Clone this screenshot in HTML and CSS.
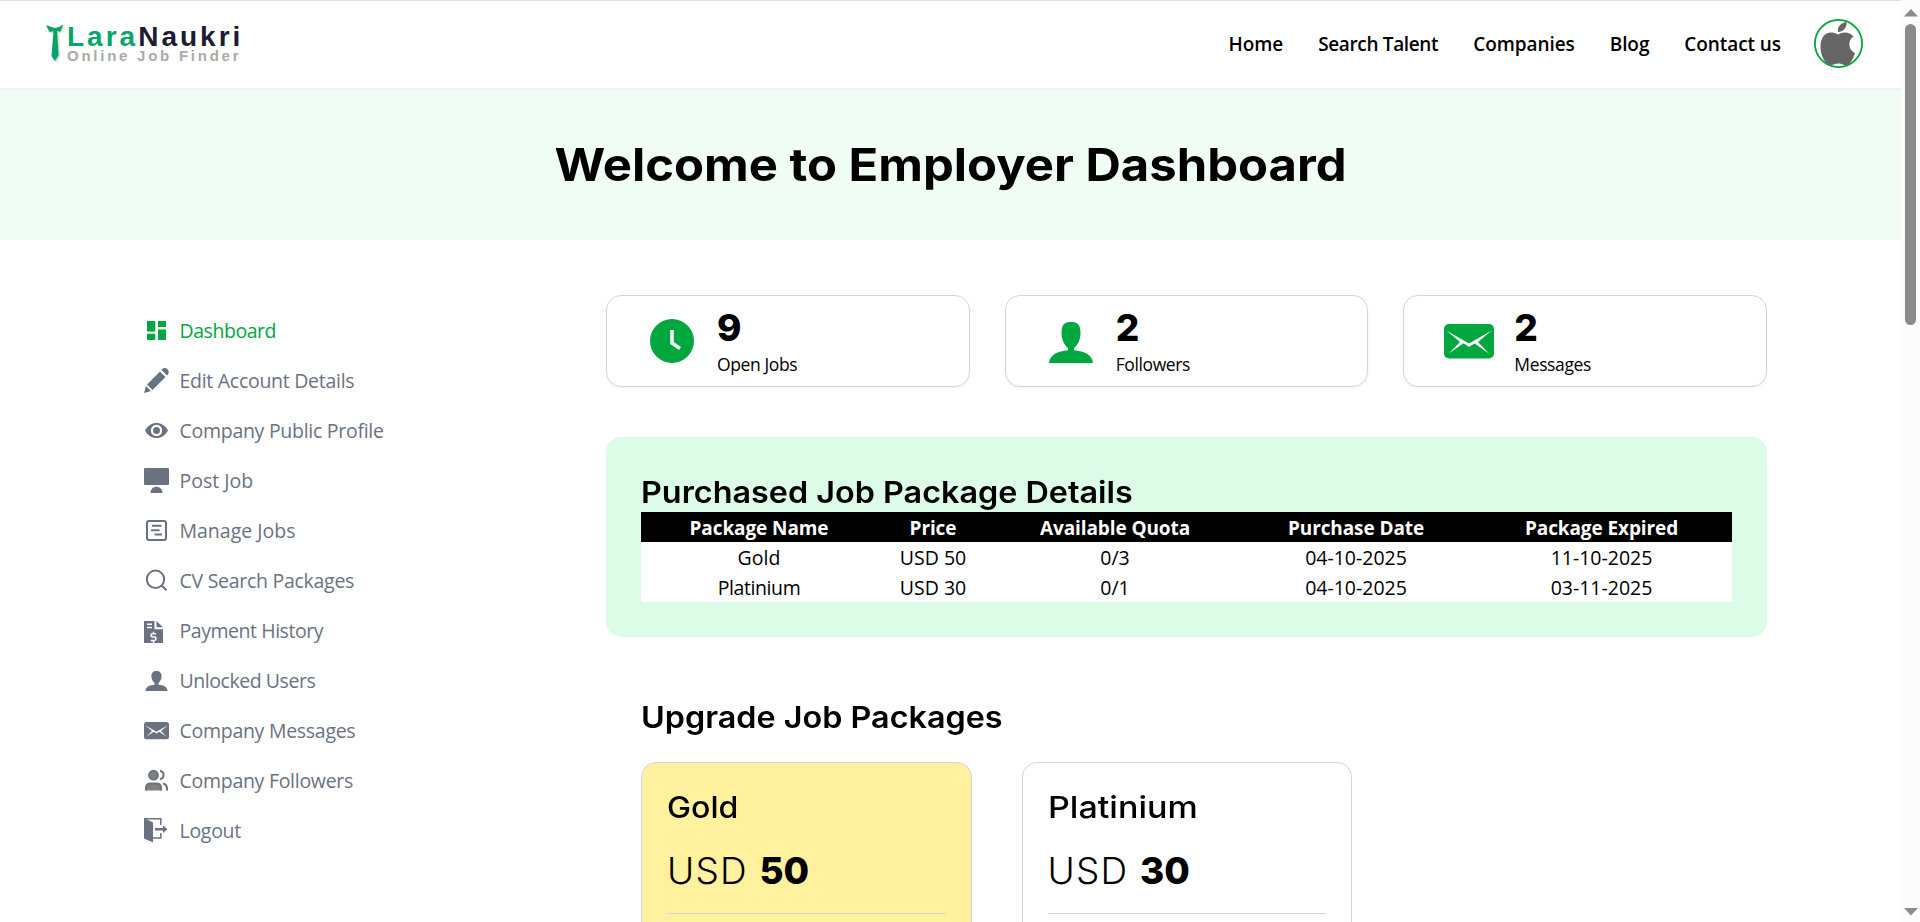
FILE: index.html
```html
<!DOCTYPE html>
<html lang="en">
<head>
<meta charset="utf-8">
<title>Employer Dashboard</title>
<link rel="stylesheet" href="styles.css">
</head>
<body>
<div class="window">
<div class="page">
  <header class="topbar">
    <a class="logo">
      <svg class="logo-tie" viewBox="0 0 18 38"><path d="M0 1 5 3 9 4 13 3 17.500 0.500 14 8 11 6.500 12.500 31 9 37 5.500 32 7.500 7 3.500 8Z" fill="#05a568"/></svg>
      <span class="logo-words">
        <span class="logo-name"><span class="logo-lara">Lara</span><span class="logo-naukri">Naukri</span></span>
        <span class="logo-tag">Online Job Finder</span>
      </span>
    </a>
    <nav class="nav">
      <a>Home</a><a class="snug">Search Talent</a><a>Companies</a><a>Blog</a><a>Contact us</a>
      <svg class="avatar" viewBox="0 0 49 49"><circle cx="24.500" cy="24.500" r="23.600" fill="#fff" stroke="#00a63e" stroke-width="1.800"/><path d="M24 15.500C28 13 35 12 39.500 17.500 33.500 21 34 31 41 34 39 40 36 46 32 46 28 46 28 44.500 24.500 44.500S20 46 17 46C11 46 6.500 36 6.500 28 6.500 15 15 10.500 24 15.500ZM24 13C23 7 28 3.500 32.500 3 33 9 29 13 24 13Z" fill="#666"/></svg>
    </nav>
  </header>
  <section class="hero"><h1>Welcome to Employer Dashboard</h1></section>
  <div class="columns">
    <aside class="side">
      <a class="active"><svg viewBox="0 0 25 25"><path d="M3 3h8.300v10.500H3zM3 15.700h8.300V22H3zM14 3h8v6h-8zM14 11.500h8V22h-8z"/></svg><span class="snug">Dashboard</span></a>
      <a><svg viewBox="0 0 25 25"><path d="M0 25 2 18 7 23ZM3 16.500 16 3.500 21.500 9 8.500 22ZM17.500 2C19.500-.5 22-.5 23.500 1.300S25.500 5.500 23 7.500Z"/></svg><span>Edit Account Details</span></a>
      <a><svg viewBox="0 0 25 25"><path fill-rule="evenodd" d="M1 12.500C6 2.500 19 2.500 24 12.500 19 22.500 6 22.500 1 12.500ZM12.500 6.800a5.700 5.700 0 1 0 0 11.400a5.700 5.700 0 1 0 0-11.400ZM12.500 9a3.500 3.500 0 1 1 0 7a3.500 3.500 0 1 1 0-7Z"/></svg><span>Company Public Profile</span></a>
      <a><svg viewBox="0 0 25 25"><rect width="25" height="17" rx="1"/><path d="M6.500 25C6.500 16.700 18.500 16.700 18.500 25Z"/></svg><span class="loose">Post Job</span></a>
      <a><svg class="line" viewBox="0 0 25 25"><rect x="3" y="3" width="19" height="19" rx="2"/><path d="M8 7.800h9.500M7 12.300h8.500M10.500 16.500H18"/></svg><span class="loose">Manage Jobs</span></a>
      <a><svg class="line" viewBox="0 0 25 25"><circle cx="11.500" cy="11.300" r="8.700"/><path d="M17.700 17.500 22.500 22.200"/></svg><span>CV Search Packages</span></a>
      <a><svg viewBox="0 0 25 25"><path d="M0 3h10.500v8.300H19V25H0zM12.500 3 19 9.300h-6.500z"/><path class="cut" d="M3 6.200h5M3 9.500h5M12 15.700H8.600Q7 15.700 7 17.300T8.600 19H10.200Q12 19 12 20.700T10.200 22.500H6.700M9.500 13.800v1.900M9.500 22.500V25"/></svg><span class="snug">Payment History</span></a>
      <a><svg viewBox="0 0 25 25"><path d="M12.500 3C16 3 17.600 5 17.600 8.500 17.600 11.500 16 13.500 14.500 15v1.800C19 17 23 18.500 23.600 23H1.400C2 18.500 6 17 10.500 16.800V15C9 13.500 7.400 11.500 7.400 8.500 7.400 5 9 3 12.500 3Z"/></svg><span class="snug">Unlocked Users</span></a>
      <a><svg viewBox="0 0 50 50"><rect y="8" width="50" height="34.500" rx="5"/><path fill="#fff" d="M2.400 14.500 25 27.500 47.700 14.500 34 26 45 37.500 30.500 27.500 25 31 19.600 27.300 4.700 37.500 16 26Z"/></svg><span>Company Messages</span></a>
      <a><svg class="line duo" viewBox="0 0 25 25"><circle cx="9.500" cy="7.200" r="4.400"/><path d="M2 22.500V20Q2 15.500 6.500 15.500H12.500Q17 15.500 17 20V22.500"/><path class="open" d="M16 3Q19.500 3.500 19.500 7T16 11M19 15.500Q23 16.500 23 20.500V22.500"/></svg><span>Company Followers</span></a>
      <a><svg viewBox="0 0 25 25"><path d="M0 0 9 4.500V24.500L0 20.500Z"/><path class="thin" d="M0 .7H16.800V7M16.800 15v5H9"/><path d="M11 10h8V7.500l4.500 3.700L19 15v-2.500h-8Z"/></svg><span>Logout</span></a>
    </aside>
    <main class="main">
      <section class="stats">
        <div class="stat"><svg viewBox="0 0 50 50"><circle cx="25" cy="25" r="22"/><path class="hand" d="M25 14V27L33 32.500"/></svg><div><b>9</b><span>Open Jobs</span></div></div>
        <div class="stat"><svg viewBox="0 0 50 50"><path d="M25 6C31 6 34.500 8 34.500 17 34.500 25 31 29.500 28 32V34.300C38 35 46.500 39 47 47H3C3.500 39 12 35 22 34.300V32C19 29.500 15.500 25 15.500 17 15.500 8 19 6 25 6Z"/></svg><div><b>2</b><span>Followers</span></div></div>
        <div class="stat"><svg viewBox="0 0 50 50"><rect y="8" width="50" height="34.500" rx="5"/><path fill="#fff" d="M2.400 14.500 25 27.500 47.700 14.500 34 26 45 37.500 30.500 27.500 25 31 19.600 27.300 4.700 37.500 16 26Z"/></svg><div><b>2</b><span>Messages</span></div></div>
      </section>
      <section class="purchased">
        <h2>Purchased Job Package Details</h2>
        <table>
          <colgroup><col class="c1"><col class="c2"><col class="c3"><col class="c4"><col class="c5"></colgroup>
          <thead><tr><th>Package Name</th><th>Price</th><th>Available Quota</th><th>Purchase Date</th><th>Package Expired</th></tr></thead>
          <tbody>
            <tr><td>Gold</td><td>USD 50</td><td>0/3</td><td>04-10-2025</td><td>11-10-2025</td></tr>
            <tr><td class="snug">Platinium</td><td>USD 30</td><td>0/1</td><td>04-10-2025</td><td>03-11-2025</td></tr>
          </tbody>
        </table>
      </section>
      <section class="upgrade">
        <h2>Upgrade Job Packages</h2>
        <div class="plans">
          <article class="plan gold"><h3>Gold</h3><p>USD <b>50</b></p></article>
          <article class="plan"><h3 class="wide">Platinium</h3><p>USD <b>30</b></p></article>
        </div>
      </section>
    </main>
  </div>
</div>
<div class="scrollbar">
  <svg viewBox="0 0 14 8"><path d="M7 0 14 7.500H0Z"/></svg>
  <i></i>
  <svg class="down" viewBox="0 0 14 8"><path d="M0 0H14L7 7.500Z"/></svg>
</div>
</div>
</body>
</html>
```
FILE: styles.css
```css
* { box-sizing: border-box; }
body { margin: 0; background: #fff; color: #000; font: 20px/30px "Open Sans", "Noto Sans", sans-serif; }
h1, h2, h3, p { margin: 0; }
.window { display: flex; height: 922px; overflow: hidden; }
.page { flex: 1; height: 922px; overflow: hidden; }

.topbar { display: flex; justify-content: space-between; height: 90px; padding: 0 38px 0 46px; border-top: 1px solid #d8e5e0; border-bottom: 2px solid #f1f2f3; }
.logo { display: flex; gap: 3px; padding-top: 23px; }
.logo-tie { width: 18px; height: 38px; filter: drop-shadow(1px 1px 1px #bbb); }
.logo-words { display: flex; flex-direction: column; font-family: "Liberation Sans", Arial, sans-serif; font-weight: bold; }
.logo-name { font-size: 28px; line-height: 26px; letter-spacing: 3px; }
.logo-lara { color: #05a568; }
.logo-naukri { color: #1b1b33; }
.logo-tag { margin-top: -1px; font-size: 15px; line-height: 14px; letter-spacing: 2.75px; color: #aaa; }
.nav { display: flex; align-items: center; gap: 35px; padding-bottom: 2px; font-weight: 600; font-size: 19px; letter-spacing: -0.08px; }
.nav .snug { letter-spacing: -0.35px; }
.avatar { width: 49px; height: 49px; margin-left: -2px; }

.hero { height: 150px; padding-top: 50px; background: #f0fdf4; text-align: center; }
h1, h2, h3, b { font-family: Inter, "Open Sans", sans-serif; }
/* Headings are set in an extended width */
h1 { font-size: 45px; line-height: 50px; font-weight: 700; transform: scaleX(1.088); }
h2, h3 { width: max-content; transform-origin: left; }

.columns { display: flex; padding: 55px 134px 0 144px; }
.side { display: flex; flex-direction: column; gap: 20px; width: 462px; padding-top: 21px; color: #6a7282; font-size: 19.5px; letter-spacing: -0.28px; }
.side a { display: flex; align-items: center; gap: 10.5px; height: 30px; }
.side .active { color: #00a63e; }
.side .snug { letter-spacing: -0.45px; }
.side .loose { letter-spacing: 0; }
.side svg { width: 25px; height: 25px; margin-top: -1px; fill: currentColor; overflow: visible; }
.side .line { fill: none; stroke: currentColor; stroke-width: 2; }
.side .duo { fill: #808080; }
.side .open { fill: none; }
.cut { fill: none; stroke: #fff; stroke-width: 1.5; }
.thin { fill: none; stroke: currentColor; stroke-width: 1.5; }

.main { flex: 1; }
.stats { display: grid; grid-template-columns: repeat(3, 1fr); gap: 35px; }
.stat { display: flex; align-items: center; gap: 20px; height: 92px; padding-left: 40px; border: 1px solid #d1d5dc; border-radius: 15px; box-shadow: 0 1px 2px #0001; }
.stat svg { width: 50px; height: 50px; fill: #00a63e; }
.stat .hand { fill: none; stroke: #fff; stroke-width: 3.5; }
.stat div { display: flex; flex-direction: column; padding-top: 4px; }
.stat b { font-size: 37px; line-height: 42px; font-weight: 800; }
.stat span { font-size: 17.5px; line-height: 30px; letter-spacing: -0.38px; }

.purchased { height: 200px; margin-top: 50px; padding: 35px; border-radius: 15px; background: #dcfce7; }
h2 { font-size: 30px; line-height: 40px; font-weight: 630; transform: scaleX(1.078); }
table { width: 1091px; border-collapse: collapse; table-layout: fixed; background: #fff; text-align: center; font-size: 19.5px; }
th, td { height: 30px; padding: 2px 0 0; line-height: 28px; }
th { font-size: 19px; letter-spacing: -0.1px; }
td.snug { letter-spacing: -0.4px; }
thead { background: #000; color: #fff; }
.c1 { width: 236px; } .c2 { width: 112px; } .c3 { width: 252px; } .c4 { width: 230px; } .c5 { width: 261px; }

.upgrade { padding: 60px 35px 0; }
.plans { display: flex; gap: 50px; margin-top: 25px; }
.plan { width: 330.5px; height: 260px; padding: 25px; border: 1px solid #d1d5dc; border-radius: 15px; }
.plan.gold { background: #fff19e; }
h3 { font-size: 30px; line-height: 39px; font-weight: 520; transform: scaleX(1.07); }
h3.wide { transform: scaleX(1.135); }
.plan p { height: 87px; border-bottom: 1px solid #d1d5dc; padding-top: 21px; font: 300 37px/45px Inter, sans-serif; letter-spacing: 1.2px; }
.plan b { font-weight: 800; letter-spacing: 0; }

.scrollbar { display: flex; flex-direction: column; align-items: center; width: 19px; padding: 9px 0 6px; background: #fcfcfc; }
.scrollbar svg { width: 14px; height: 8px; fill: #8b8b8b; }
.scrollbar i { width: 11px; height: 301px; margin-top: 7px; border-radius: 6px; background: #8b8b8b; }
.scrollbar .down { margin-top: auto; }
```
